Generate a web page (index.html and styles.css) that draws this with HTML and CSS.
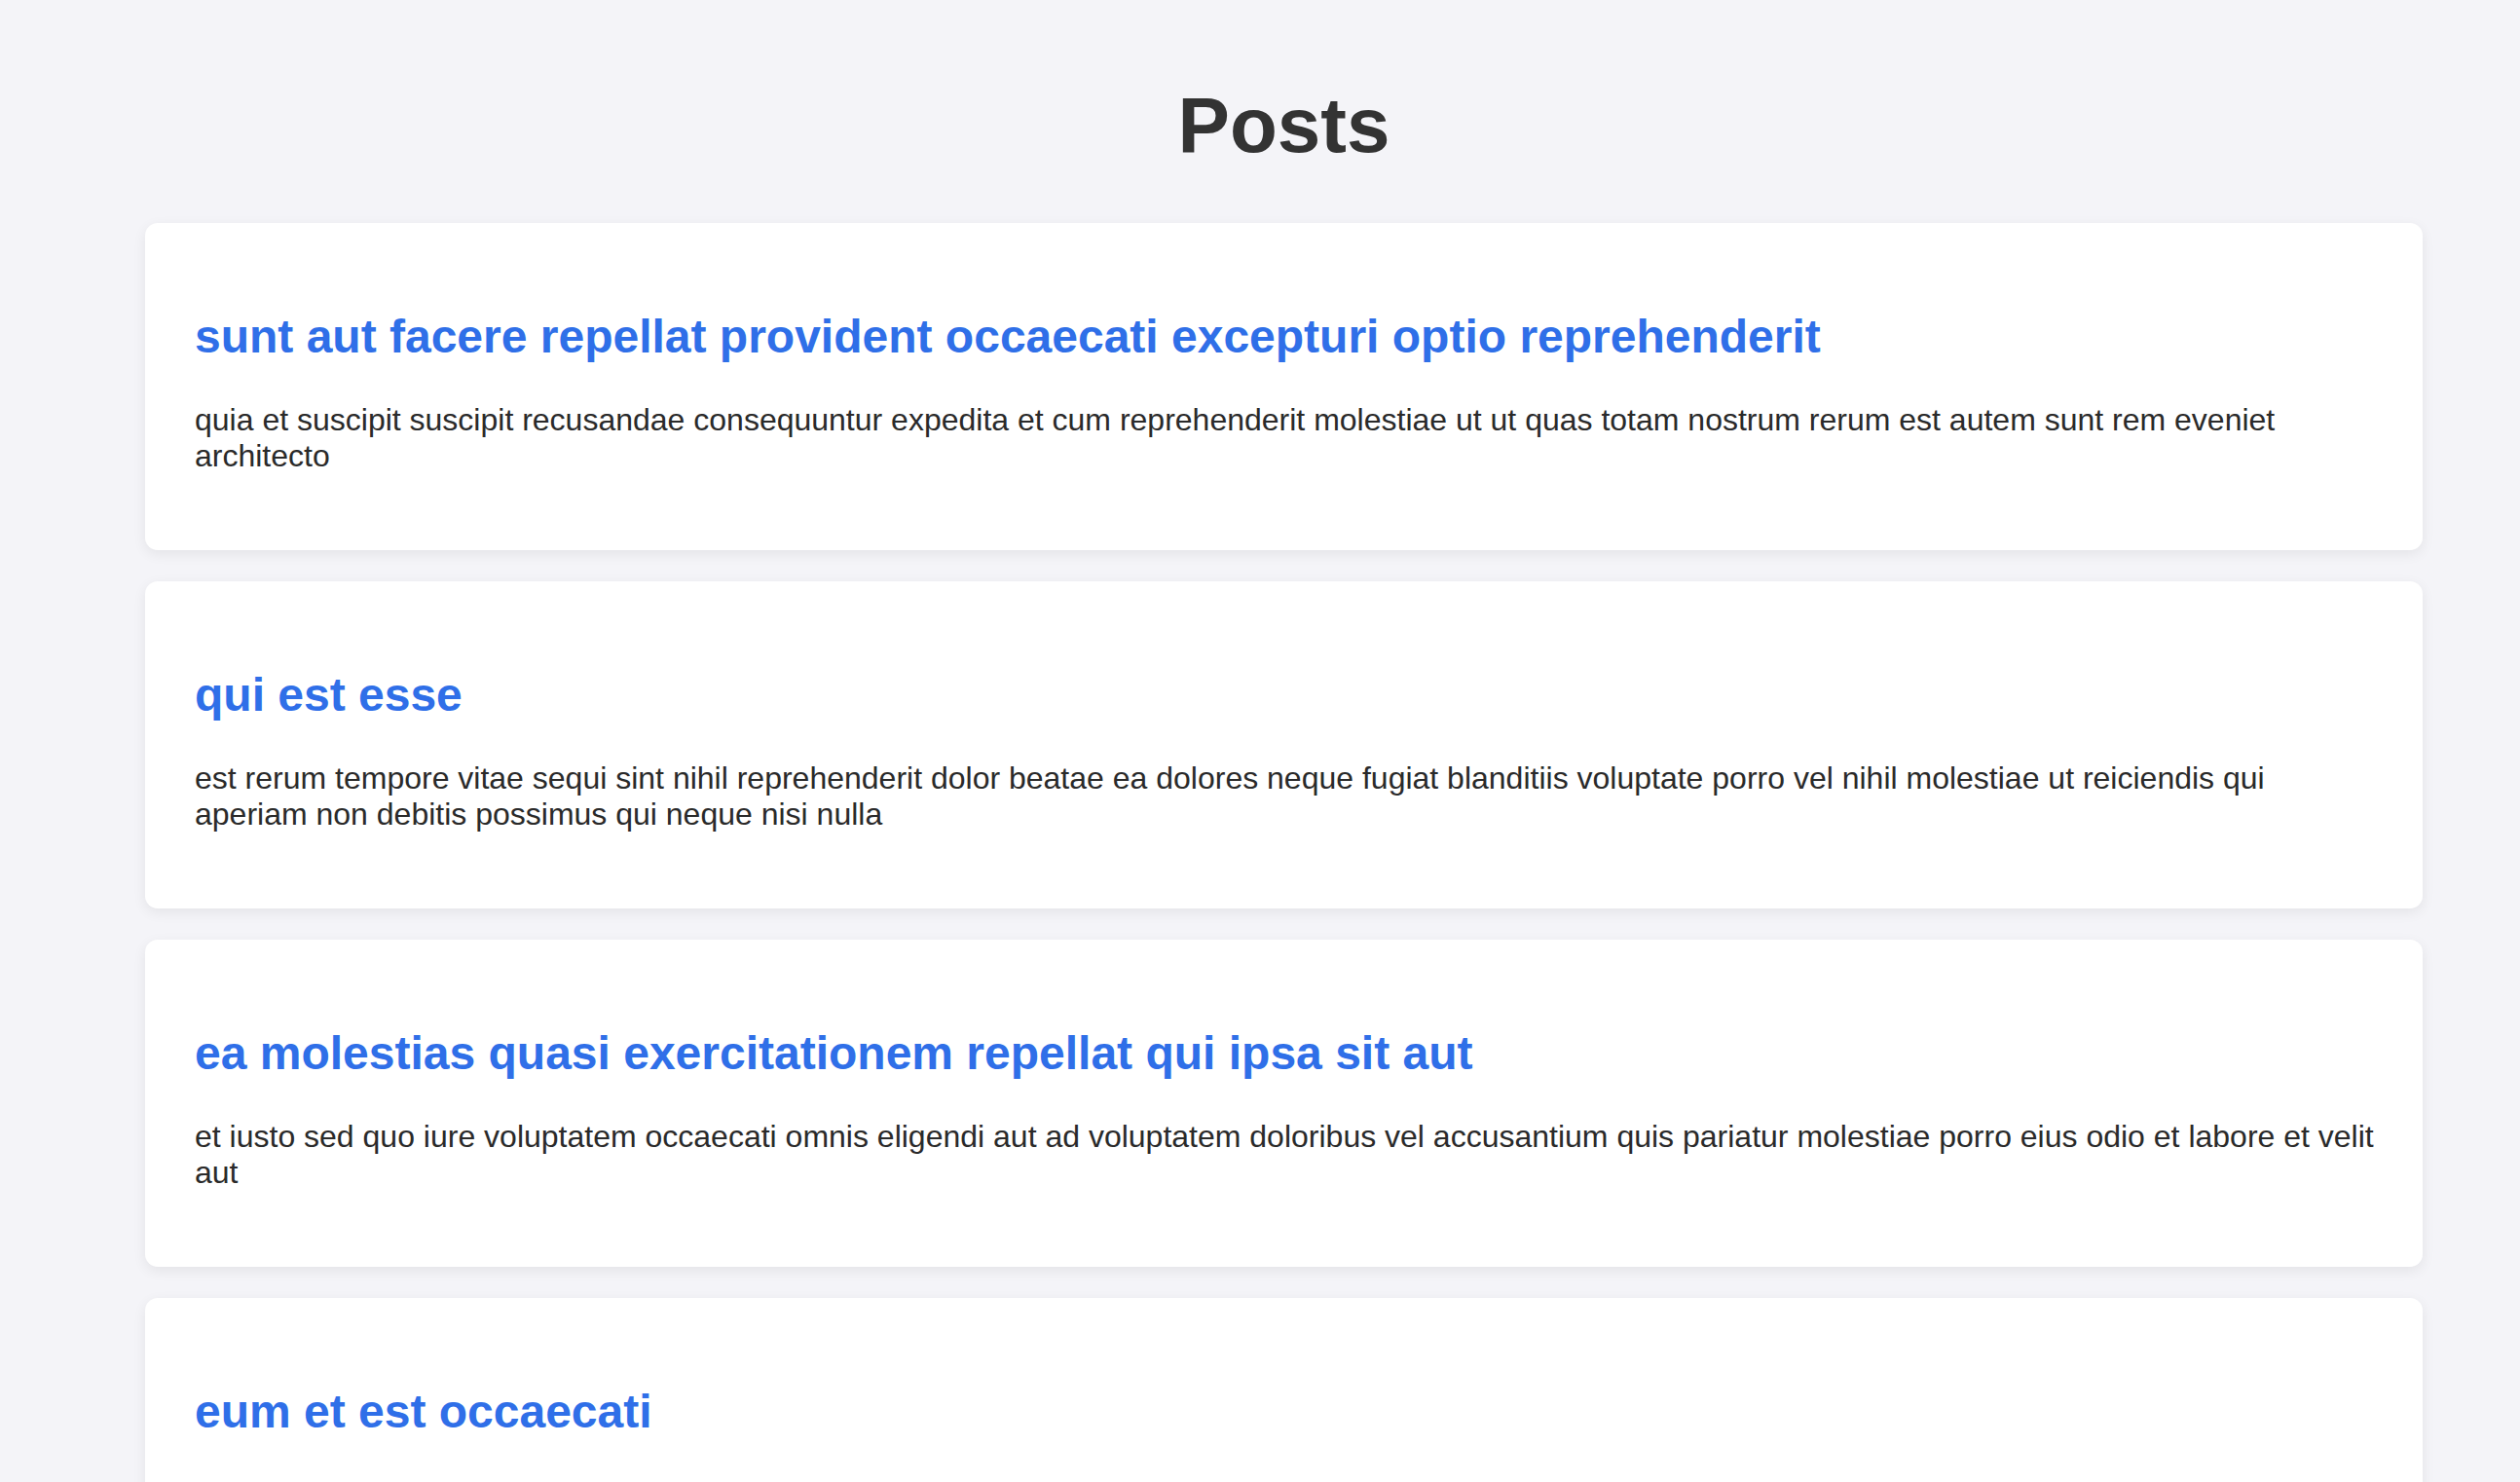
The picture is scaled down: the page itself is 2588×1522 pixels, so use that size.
FILE: index.html
```html
<!DOCTYPE html>
<html lang="en">
<head>
<meta charset="utf-8">
<title>Posts</title>
<link rel="stylesheet" href="styles.css">
</head>
<body>
<main class="page">
  <h1 class="page-title">Posts</h1>
  <section class="post-list">
    <article class="post">
      <h2 class="post-title">sunt aut facere repellat provident occaecati excepturi optio reprehenderit</h2>
      <p class="post-body">quia et suscipit suscipit recusandae consequuntur expedita et cum reprehenderit molestiae ut ut quas totam nostrum rerum est autem sunt rem eveniet architecto</p>
    </article>
    <article class="post">
      <h2 class="post-title">qui est esse</h2>
      <p class="post-body">est rerum tempore vitae sequi sint nihil reprehenderit dolor beatae ea dolores neque fugiat blanditiis voluptate porro vel nihil molestiae ut reiciendis qui aperiam non debitis possimus qui neque nisi nulla</p>
    </article>
    <article class="post">
      <h2 class="post-title">ea molestias quasi exercitationem repellat qui ipsa sit aut</h2>
      <p class="post-body">et iusto sed quo iure voluptatem occaecati omnis eligendi aut ad voluptatem doloribus vel accusantium quis pariatur molestiae porro eius odio et labore et velit aut</p>
    </article>
    <article class="post">
      <h2 class="post-title">eum et est occaecati</h2>
      <p class="post-body">ullam et saepe reiciendis voluptatem adipisci sit amet autem assumenda provident rerum culpa quis hic commodi nesciunt rem tenetur doloremque ipsam iure quis sunt voluptatem rerum illo velit</p>
    </article>
  </section>
</main>
</body>
</html>
```

FILE: styles.css
```css
html, body {
  margin: 0;
  padding: 0;
  background: #f4f4f8;
}

body {
  font-family: "Liberation Sans", Arial, Helvetica, sans-serif;
  color: #333333;
}

.page {
  padding: 83px 100px 40px 149px;
}

.page-title {
  margin: 0 0 54px;
  text-align: center;
  font-size: 80px;
  font-weight: 700;
  line-height: 92px;
  color: #333333;
}

.post-list {
  display: flex;
  flex-direction: column;
  gap: 32px;
}

.post {
  background: #ffffff;
  border-radius: 13px;
  padding: 49px 42px 49px 51px;
  box-shadow: 0 4px 14px rgba(0, 0, 0, 0.07);
}

.post-title {
  margin: 40px 0 40px;
  font-size: 48px;
  line-height: 55px;
  font-weight: 700;
  color: #2f6fe8;
}

.post-body {
  margin: 0 0 29px;
  font-size: 32px;
  line-height: 37px;
  color: #2a2a2a;
}
```
